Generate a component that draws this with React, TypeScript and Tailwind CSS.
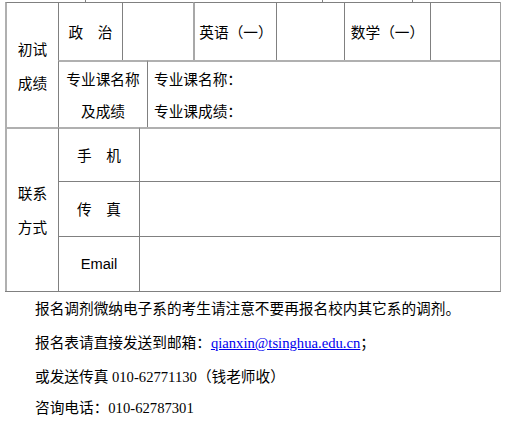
import React from "react";

const sans = { fontFamily: '"Noto Sans CJK SC", "Liberation Sans", sans-serif' };

export default function App() {
  const cellB = "border-l border-t border-[#808080]";
  return (
    <div className="w-[506px] h-[434px] bg-white text-black text-[14.67px] overflow-hidden" style={sans}>
      {/* partial row above */}
      <div className="flex h-[2px]">
        <div className="w-[85px]" />
        <div className="w-[237px] border-l border-[#808080]" />
        <div className="w-[90px] border-l border-[#808080]" />
        <div className="flex-1 border-l border-[#808080]" />
      </div>
      <div className="ml-[5px] w-[496px] border-r border-b border-r-[#a0a0a0] border-b-[#808080]">
        {/* section 1 */}
        <div className="flex h-[125px]">
          <div className={`w-[53px] border-l-2 border-l-[#b0b0b0] border-t border-[#808080] flex flex-col items-center justify-center leading-[34px] pt-[1px]`}>
            <div>初试</div>
            <div>成绩</div>
          </div>
          <div className="flex-1 flex flex-col">
            <div className="flex h-[58px]">
              <div className={`w-[64px] ${cellB} flex items-center justify-center`}>政　治</div>
              <div className={`w-[71px] ${cellB}`} />
              <div className={`w-[83px] border-l-2 border-l-[#a8a8a8] border-t border-[#808080] flex items-center justify-center pl-[1px]`}>英语（一）</div>
              <div className={`w-[68px] ${cellB}`} />
              <div className={`w-[86px] ${cellB} flex items-center justify-center`}>数学（一）</div>
              <div className={`flex-1 ${cellB}`} />
            </div>
            <div className="flex h-[67px]">
              <div className={`w-[89px] border-l border-t-2 border-l-[#808080] border-t-[#b0b0b0] flex flex-col items-center justify-center leading-[32px]`}>
                <div>专业课名称</div>
                <div>及成绩</div>
              </div>
              <div className={`flex-1 border-l border-t-2 border-l-[#808080] border-t-[#b0b0b0] flex flex-col justify-center pl-[6px] leading-[32px]`}>
                <div>专业课名称：</div>
                <div>专业课成绩：</div>
              </div>
            </div>
          </div>
        </div>
        {/* section 2 */}
        <div className="flex h-[164px]">
          <div className={`w-[53px] border-l-2 border-l-[#b0b0b0] border-t-2 border-t-[#b0b0b0] flex flex-col items-center justify-center leading-[34px]`}>
            <div>联系</div>
            <div>方式</div>
          </div>
          <div className="flex-1 flex flex-col">
            <div className="flex h-[54px]">
              <div className={`w-[81px] border-l border-t-2 border-l-[#808080] border-t-[#b0b0b0] flex items-center justify-center`}>手　机</div>
              <div className={`flex-1 border-l border-t-2 border-l-[#808080] border-t-[#b0b0b0]`} />
            </div>
            <div className="flex h-[55px]">
              <div className={`w-[81px] ${cellB} flex items-center justify-center`}>传　真</div>
              <div className={`flex-1 ${cellB}`} />
            </div>
            <div className="flex h-[55px]">
              <div className={`w-[81px] ${cellB} flex items-center justify-center`} style={{ fontFamily: '"Liberation Sans", Arial, sans-serif' }}>Email</div>
              <div className={`flex-1 ${cellB}`} />
            </div>
          </div>
        </div>
      </div>
      {/* notes */}
      <div className="pl-[35px]" style={{ fontFamily: '"Liberation Serif", "Noto Sans CJK SC", serif' }}>
        <div className="h-[34px] leading-[34px]">报名调剂微纳电子系的考生请注意不要再报名校内其它系的调剂。</div>
        <div className="h-[34px] leading-[34px]">
          报名表请直接发送到邮箱：<span className="text-[#0000ee] underline">qianxin@tsinghua.edu.cn</span>；
        </div>
        <div className="h-[34px] leading-[34px]">或发送传真 010-62771130（钱老师收）</div>
        <div className="h-[28px] leading-[28px]">咨询电话：010-62787301</div>
      </div>
    </div>
  );
}
